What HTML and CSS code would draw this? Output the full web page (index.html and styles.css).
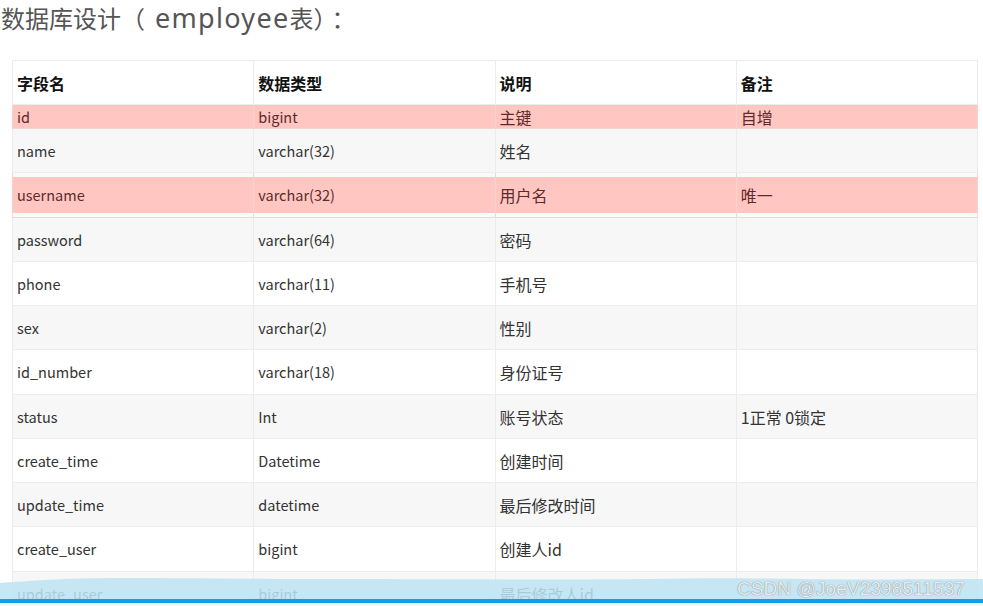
FILE: index.html
```html
<!DOCTYPE html>
<html lang="zh-CN">
<head>
<meta charset="utf-8">
<title>数据库设计</title>
<link rel="stylesheet" href="styles.css">
</head>
<body>
<div class="page">
  <h1 class="title">数据库设计（<span class="latin">employee</span>表）<span class="colon">：</span></h1>
  <table class="schema">
    <thead>
      <tr class="head"><th>字段名</th><th>数据类型</th><th>说明</th><th>备注</th></tr>
    </thead>
    <tbody>
      <tr class="hl short"><td>id</td><td>bigint</td><td>主键</td><td>自增</td></tr>
      <tr class="even"><td>name</td><td>varchar(32)</td><td>姓名</td><td></td></tr>
      <tr class="hl inset"><td>username</td><td>varchar(32)</td><td>用户名</td><td>唯一</td></tr>
      <tr class="even"><td>password</td><td>varchar(64)</td><td>密码</td><td></td></tr>
      <tr><td>phone</td><td>varchar(11)</td><td>手机号</td><td></td></tr>
      <tr class="even"><td>sex</td><td>varchar(2)</td><td>性别</td><td></td></tr>
      <tr><td>id_number</td><td>varchar(18)</td><td>身份证号</td><td></td></tr>
      <tr class="even"><td>status</td><td>Int</td><td>账号状态</td><td>1正常 0锁定</td></tr>
      <tr><td>create_time</td><td>Datetime</td><td>创建时间</td><td></td></tr>
      <tr class="even"><td>update_time</td><td>datetime</td><td>最后修改时间</td><td></td></tr>
      <tr><td>create_user</td><td>bigint</td><td>创建人id</td><td></td></tr>
      <tr class="even"><td>update_user</td><td>bigint</td><td>最后修改人id</td><td></td></tr>
    </tbody>
  </table>
</div>
<div class="wave">
  <svg class="wave-svg" width="983" height="29" viewBox="0 0 983 29" preserveAspectRatio="none">
    <path d="M0 6 C 30 4, 60 1, 120 1 C 200 1, 240 2, 300 2 C 420 2, 560 3, 650 2 C 700 1, 740 1, 800 2 C 880 3, 940 2, 983 2 L 983 22 L 0 22 Z" fill="#bfe3f2" fill-opacity="0.86"/>
    <rect x="0" y="22" width="983" height="4" fill="#0ba3e3"/>
    <rect x="0" y="26" width="983" height="3" fill="#f1f3f4"/>
  </svg>
  <span class="mark">CSDN @JoeV2398511537</span>
</div>
</body>
</html>
```
FILE: styles.css
```css
html, body {
  margin: 0;
  padding: 0;
  background: #ffffff;
  overflow: hidden;
}

body {
  width: 983px;
  height: 606px;
  position: relative;
  font-family: "Noto Sans CJK SC", "Noto Sans", sans-serif;
}

.title {
  margin: 0;
  padding: 0 0 0 1px;
  height: 60px;
  line-height: 35px;
  font-size: 24px;
  font-weight: 400;
  color: #555555;
  white-space: nowrap;
}

.title .latin {
  font-family: "Noto Sans", sans-serif;
  font-size: 27px;
  letter-spacing: 1.3px;
  margin-left: 10px;
}

.title .colon {
  margin-left: 6px;
}

.schema {
  margin-left: 12px;
  width: 966px;
  border-collapse: collapse;
  table-layout: fixed;
  font-size: 16px;
  line-height: 20px;
  color: #333333;
}

.schema th,
.schema td {
  border: 1px solid #ececec;
  padding: 1px 4px 0 4px;
  text-align: left;
  vertical-align: middle;
  white-space: nowrap;
}

.schema td:nth-child(1),
.schema td:nth-child(2) {
  font-size: 14.5px;
}

.schema tr {
  height: 44.25px;
}

.schema .head {
  height: 44px;
}

.schema .head th {
  font-weight: 700;
  color: #111111;
  background: #ffffff;
}

.schema tr.even td {
  background: #f7f7f7;
}

.schema tr.short {
  height: 24px;
}

.schema tr.hl td {
  background: #ffc6c2;
  color: #5e2a2a;
  border-color: #f6d4d2;
}

.schema tr.inset td {
  box-shadow: inset 0 4px 0 #fafafa, inset 0 -4px 0 #fafafa;
}

.wave {
  position: absolute;
  left: 0;
  bottom: 0;
  width: 983px;
  height: 29px;
}

.wave-svg {
  display: block;
}

.mark {
  position: absolute;
  left: 737px;
  top: 2px;
  font-family: "Liberation Sans", Arial, sans-serif;
  font-size: 19px;
  line-height: 20px;
  color: #ececec;
  text-shadow: 0 0 1px rgba(70, 70, 70, 0.85);
  letter-spacing: 0.1px;
}
```
